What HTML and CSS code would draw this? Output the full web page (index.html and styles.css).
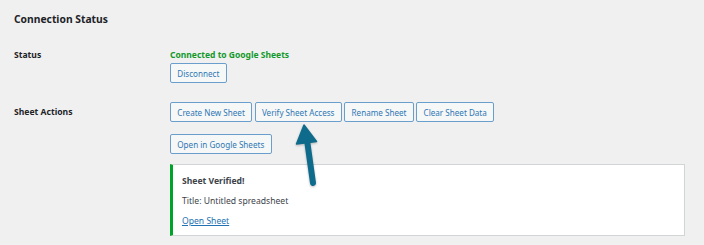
FILE: index.html
```html
<!DOCTYPE html>
<html>
<head>
<meta charset="utf-8">
<link rel="stylesheet" href="styles.css">
</head>
<body>
<div class="wrap">
  <h2 class="title">Connection Status</h2>
  <div class="row row-status">
    <div class="label">Status</div>
    <div class="field">
      <div class="connected">Connected to Google Sheets</div>
      <div class="btns btns-disc"><span class="btn">Disconnect</span></div>
    </div>
  </div>
  <div class="row row-actions">
    <div class="label label-actions">Sheet Actions</div>
    <div class="field">
      <div class="btns">
        <span class="btn">Create New Sheet</span>
        <span class="btn">Verify Sheet Access</span>
        <span class="btn">Rename Sheet</span>
        <span class="btn">Clear Sheet Data</span>
      </div>
      <div class="btns btns-open"><span class="btn">Open in Google Sheets</span></div>
      <div class="notice">
        <p class="notice-line notice-strong">Sheet Verified!</p>
        <p class="notice-line">Title: Untitled spreadsheet</p>
        <p class="notice-line"><a class="notice-link" href="#">Open Sheet</a></p>
      </div>
    </div>
  </div>
</div>
<svg class="arrow" width="704" height="245" viewBox="0 0 704 245">
  <line x1="313" y1="183" x2="307" y2="140" stroke="#0f6b8b" stroke-width="6" stroke-linecap="round"/>
  <polygon points="304,125 296.5,144 316.5,141.5" fill="#0f6b8b" stroke="#0f6b8b" stroke-width="1.5" stroke-linejoin="round"/>
</svg>
</body>
</html>
```
FILE: styles.css
```css
html, body {
  margin: 0;
  padding: 0;
  background: #f0f0f1;
}
body {
  font-family: "Noto Sans", "Open Sans", sans-serif;
  color: #1d2327;
  width: 704px;
  height: 245px;
  overflow: hidden;
  position: relative;
}
.wrap {
  padding: 12px 19px 0 14px;
}
.title {
  margin: 0;
  font-size: 10.3px;
  line-height: 14px;
  font-weight: 700;
  color: #1d2327;
}
.row {
  display: grid;
  grid-template-columns: 156px 1fr;
}
.row-status {
  margin-top: 22.5px;
}
.row-actions {
  margin-top: 19px;
}
.label {
  font-size: 8.6px;
  line-height: 12px;
  font-weight: 700;
  color: #1d2327;
}
.label-actions {
  padding-top: 3.7px;
}
.connected {
  font-size: 8.5px;
  line-height: 12px;
  font-weight: 700;
  color: #13992b;
}
.btns {
  display: flex;
  gap: 2.5px;
}
.btns-disc {
  margin-top: 2.5px;
}
.btns-open {
  margin-top: 12px;
}
.btn {
  display: inline-flex;
  align-items: center;
  box-sizing: border-box;
  height: 20px;
  padding: 0 6.3px;
  font-size: 8.1px;
  color: #2f78b5;
  background: #f6f7f7;
  border: 1px solid #6a9fcd;
  border-radius: 2px;
  white-space: nowrap;
}
.notice {
  margin-top: 10px;
  width: 515px;
  box-sizing: border-box;
  background: #ffffff;
  border: 1px solid #d3d4d6;
  border-left: 3px solid #00a32a;
  padding: 6px 9px 4px 9px;
}
.notice-line {
  margin: 0;
  font-size: 8.6px;
  line-height: 20px;
  color: #3c434a;
}
.notice-strong {
  font-weight: 700;
}
.notice-link {
  color: #2271b1;
  text-decoration: underline;
}
.arrow {
  position: absolute;
  left: 0;
  top: 0;
  pointer-events: none;
  filter: drop-shadow(0.5px 1px 0.8px rgba(0,0,0,0.25));
}
```
